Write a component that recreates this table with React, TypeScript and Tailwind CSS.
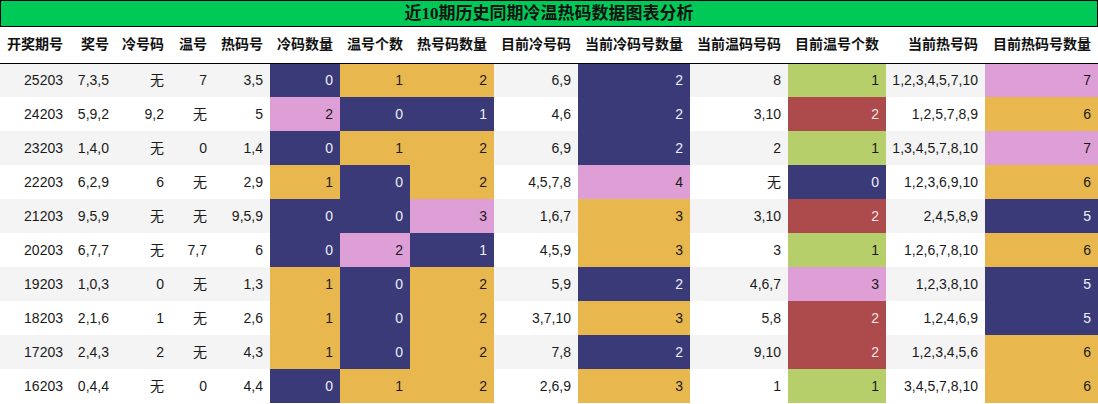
const cols = [
  { label: "开奖期号", w: 70 },
  { label: "奖号", w: 46 },
  { label: "冷号码", w: 55 },
  { label: "温号", w: 43 },
  { label: "热码号", w: 56 },
  { label: "冷码数量", w: 70 },
  { label: "温号个数", w: 70 },
  { label: "热号码数量", w: 84 },
  { label: "目前冷号码", w: 84 },
  { label: "当前冷码号数量", w: 112 },
  { label: "当前温码号码", w: 98 },
  { label: "目前温号个数", w: 98 },
  { label: "当前热号码", w: 99 },
  { label: "目前热码号数量", w: 113 },
];

// colour keys: N navy, G gold, P pink, L lime, R red
const tone: Record<string, string> = {
  N: "bg-[#3a3a78] text-[#eeeef6]",
  G: "bg-[#e8b84f] text-[#1a1a1a]",
  P: "bg-[#dd9fd6] text-[#1a1a1a]",
  L: "bg-[#b7cf6b] text-[#1a1a1a]",
  R: "bg-[#ad4a4c] text-[#f2e6e6]",
};

const rows: string[][] = [
  ["25203", "7,3,5", "无", "7", "3,5", "0N", "1G", "2G", "6,9", "2N", "8", "1L", "1,2,3,4,5,7,10", "7P"],
  ["24203", "5,9,2", "9,2", "无", "5", "2P", "0N", "1N", "4,6", "2N", "3,10", "2R", "1,2,5,7,8,9", "6G"],
  ["23203", "1,4,0", "无", "0", "1,4", "0N", "1G", "2G", "6,9", "2N", "2", "1L", "1,3,4,5,7,8,10", "7P"],
  ["22203", "6,2,9", "6", "无", "2,9", "1G", "0N", "2G", "4,5,7,8", "4P", "无", "0N", "1,2,3,6,9,10", "6G"],
  ["21203", "9,5,9", "无", "无", "9,5,9", "0N", "0N", "3P", "1,6,7", "3G", "3,10", "2R", "2,4,5,8,9", "5N"],
  ["20203", "6,7,7", "无", "7,7", "6", "0N", "2P", "1N", "4,5,9", "3G", "3", "1L", "1,2,6,7,8,10", "6G"],
  ["19203", "1,0,3", "0", "无", "1,3", "1G", "0N", "2G", "5,9", "2N", "4,6,7", "3P", "1,2,3,8,10", "5N"],
  ["18203", "2,1,6", "1", "无", "2,6", "1G", "0N", "2G", "3,7,10", "3G", "5,8", "2R", "1,2,4,6,9", "5N"],
  ["17203", "2,4,3", "2", "无", "4,3", "1G", "0N", "2G", "7,8", "2N", "9,10", "2R", "1,2,3,4,5,6", "6G"],
  ["16203", "0,4,4", "无", "0", "4,4", "0N", "1G", "2G", "2,6,9", "3G", "1", "1L", "3,4,5,7,8,10", "6G"],
];

const colored = new Set([5, 6, 7, 9, 11, 13]);

export default function App() {
  return (
    <div className="w-[1098px] h-[404px] bg-white overflow-hidden font-['Liberation_Sans','Noto_Sans_CJK_SC',sans-serif] text-[14px]">
      <div className="h-[27px] border border-black bg-[#00c957] flex items-center justify-center">
        <span className="font-bold text-[17px] text-[#111] font-['Liberation_Serif','Noto_Sans_CJK_SC',serif]">
          近10期历史同期冷温热码数据图表分析
        </span>
      </div>
      <table className="table-fixed border-collapse w-[1098px]">
        <colgroup>
          {cols.map((c) => (
            <col key={c.label} style={{ width: c.w }} />
          ))}
        </colgroup>
        <thead>
          <tr className="h-[36px] border-b border-black">
            {cols.map((c) => (
              <th key={c.label} className="text-right font-bold text-[#111] pr-[7px] whitespace-nowrap">
                {c.label}
              </th>
            ))}
          </tr>
        </thead>
        <tbody>
          {rows.map((r, i) => (
            <tr key={r[0]} className={`h-[34px] ${i % 2 === 0 ? "bg-[#f4f4f4]" : "bg-white"}`}>
              {r.map((v, j) => {
                if (colored.has(j)) {
                  const key = v.slice(-1);
                  return (
                    <td key={j} className={`text-right pr-[7px] p-0 ${tone[key]}`}>
                      {v.slice(0, -1)}
                    </td>
                  );
                }
                return (
                  <td key={j} className="text-right pr-[7px] p-0 text-[#1a1a1a] whitespace-nowrap">
                    {v}
                  </td>
                );
              })}
            </tr>
          ))}
        </tbody>
      </table>
    </div>
  );
}
